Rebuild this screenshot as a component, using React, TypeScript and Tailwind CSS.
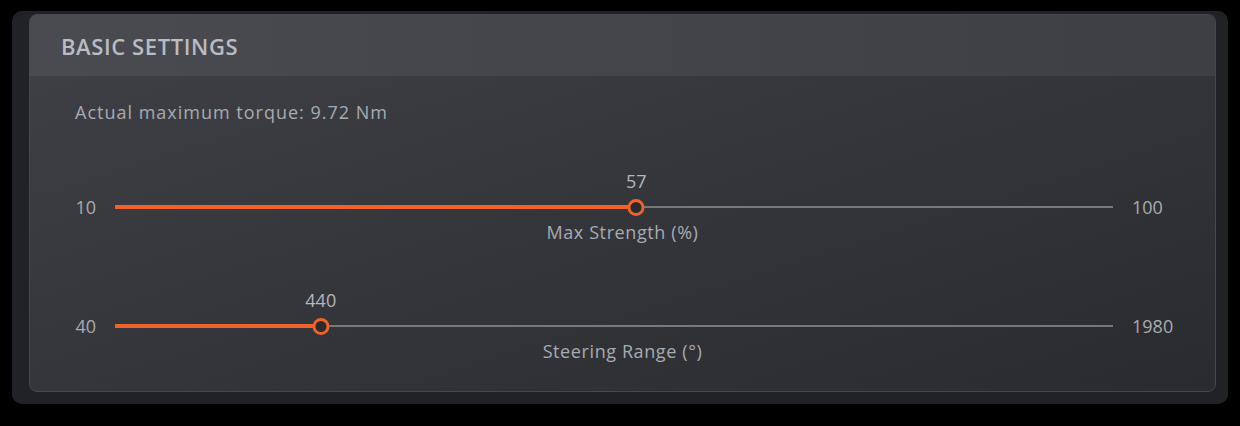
const sliders = [
  { min: 10, max: 100, value: 57, label: 'Max Strength (%)' },
  { min: 40, max: 1980, value: 440, label: 'Steering Range (°)' },
]

function Slider({ min, max, value, label }: { min: number; max: number; value: number; label: string }) {
  const pct = ((value - min) / (max - min)) * 100
  return (
    <div className="flex flex-col">
      <div className="flex h-[30px] items-center">
        <div className="w-[50px] text-right">{min}</div>
        <div className="relative ml-[19px] h-[30px] flex-1">
          <div className="absolute left-0 right-0 top-[14px] h-[1.5px] bg-[#77787c]" />
          <div
            className="absolute left-0 top-[13px] h-[4px] bg-[#f0622a]"
            style={{ width: `${pct}%` }}
          />
          <div
            className="absolute top-[7px] h-[17px] w-[17px] -translate-x-1/2 rounded-full border-[3px] border-[#f0622a] bg-[#2a2b2f]"
            style={{ left: `${pct}%` }}
          />
          <div
            className="absolute top-[-23px] -translate-x-1/2 text-[#b3b7bd]"
            style={{ left: `${pct}%` }}
          >
            {value}
          </div>
        </div>
        <div className="ml-[19px] w-[67px]">{max}</div>
      </div>
      <div className="text-center leading-[20px] tracking-[0.6px]">{label}</div>
    </div>
  )
}

export default function App() {
  return (
    <div
      className="h-[426px] w-[1240px] bg-black pl-[12px] pt-[11px] text-[18px] leading-[24px] text-[#a7abb2]"
      style={{ fontFamily: '"Open Sans", "Liberation Sans", sans-serif' }}
    >
      <div className="h-[393px] w-[1216px] rounded-[10px] bg-[#212226] pb-[12px] pl-[17px] pr-[12px] pt-[3px]">
        <div className="flex h-full flex-col overflow-hidden rounded-[8px] border border-[#47484d] bg-gradient-to-br from-[#404146] to-[#2a2b2f]">
          <div className="flex h-[61px] items-center bg-gradient-to-r from-[#4a4b50] to-[#3e3f43] pl-[31px] text-[22px] font-semibold tracking-[0.6px] text-[#b9bcc2]">
            BASIC SETTINGS
          </div>
          <div className="flex flex-col px-[16px] pt-[24px]">
            <div className="pl-[29px] tracking-[1px]">Actual maximum torque: 9.72 Nm</div>
            <div className="mt-[68px] flex flex-col gap-[69px]">
              {sliders.map((s) => (
                <Slider key={s.label} {...s} />
              ))}
            </div>
          </div>
        </div>
      </div>
    </div>
  )
}
